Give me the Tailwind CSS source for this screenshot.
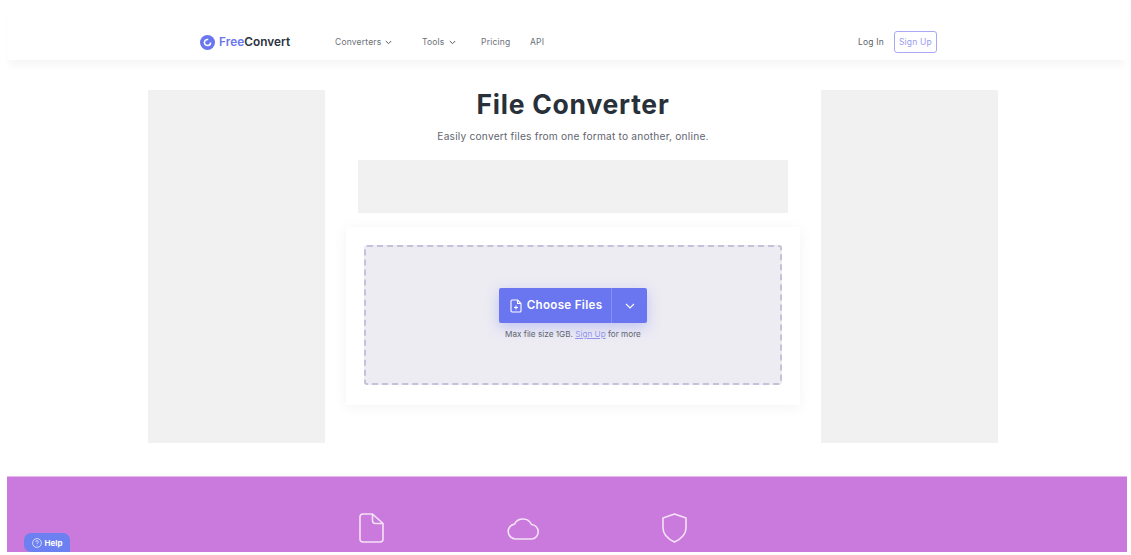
<!DOCTYPE html>
<html lang="en">
<head>
    <meta charset="utf-8">
    <title>File Converter</title>
    <script src="https://cdn.jsdelivr.net/npm/@tailwindcss/browser@4"></script>
</head>
<body class="bg-white font-['Inter',sans-serif] overflow-hidden">
    <div class="relative h-[555px] w-[1131px] overflow-hidden pl-[7px] pr-[4px]">

        <!-- Header -->
        <header class="h-[60px] flex items-center pt-[24px] pl-[193px] pr-[190px] bg-white shadow-[0_8px_7px_-2px_rgba(0,0,0,0.035)]">
            <a class="flex items-center gap-[4px] w-[135px] text-[11.8px] tracking-[0.05px] font-semibold text-[#2b3240]">
                <svg width="15" height="15" viewBox="0 0 16 16" class="shrink-0">
                    <circle cx="8" cy="8" r="8" fill="#6a76ee"/>
                    <circle cx="8" cy="8" r="3.300" fill="none" stroke="#fff" stroke-width="1.600" stroke-dasharray="16 5"/>
                </svg>
                <span class="mt-[1px]"><span class="text-[#6a76ee]">Free</span>Convert</span>
            </a>
            <nav class="flex items-center text-[8.5px] text-[#6b7078] tracking-[0.2px]">
                <a class="flex items-center gap-[4px] w-[87px]">Converters
                    <svg width="7" height="5" viewBox="0 0 7 5" fill="none" stroke="#555b64" stroke-width="1"><path d="M.8 1l2.700 2.700L6.200 1"/></svg>
                </a>
                <a class="flex items-center gap-[4px] w-[59px]">Tools
                    <svg width="7" height="5" viewBox="0 0 7 5" fill="none" stroke="#555b64" stroke-width="1"><path d="M.8 1l2.700 2.700L6.200 1"/></svg>
                </a>
                <a class="w-[49px]">Pricing</a>
                <a>API</a>
            </nav>
            <div class="ml-auto flex items-center gap-[10px] text-[8.5px] tracking-[0.2px]">
                <a class="text-[#5c6169]">Log In</a>
                <a class="h-[22px] w-[43px] flex items-center justify-center rounded-[3px] border border-[#a9a8f5] text-[#9a9cf0]">Sign Up</a>
            </div>
        </header>

        <!-- Main -->
        <main class="flex justify-center gap-[21px] pt-[30px] h-[416px] pl-[12px]">
            <div class="w-[177px] h-[353px] bg-[#f1f1f1]"></div>

            <section class="w-[454px] flex flex-col items-center">
                <h1 class="text-[26.5px] leading-[29px] font-bold tracking-[0.75px] text-[#283039]">File Converter</h1>
                <p class="mt-[10px] text-[10.2px] leading-[14px] tracking-[0.2px] text-[#5f6570]">Easily convert files from one format to another, online.</p>
                <div class="mt-[17px] w-[430px] h-[53px] bg-[#f1f1f1]"></div>

                <div class="mt-[14px] w-[454px] h-[178px] bg-white pt-[18px] pl-[18px] shadow-[0_2px_14px_rgba(0,0,0,0.05)]">
                    <div class="h-[140px] w-[418px] rounded-[3px] border-2 border-dashed border-[#c4c2da] bg-[#edecf3] flex flex-col items-center pt-[41px]">
                        <div class="flex h-[35px] w-[148px] rounded-[2px] bg-[#6a76f0] shadow-[0_4px_14px_rgba(106,118,240,0.35)] text-white">
                            <button class="flex-1 flex items-center justify-center gap-[5px] pl-[2px] text-[11.600px] font-semibold tracking-[0.3px]">
                                <svg width="12" height="14" viewBox="0 0 12 14" fill="none" stroke="#fff" stroke-width="1.100" stroke-linejoin="round">
                                    <path d="M1 2a1 1 0 0 1 1-1h5.500L11 4.500V12a1 1 0 0 1-1 1H2a1 1 0 0 1-1-1z"/>
                                    <path d="M7.500 1v3.500H11M6 6.500v4M4 8.500h4"/>
                                </svg>
                                Choose Files
                            </button>
                            <button class="w-[36px] flex items-center justify-center border-l border-[#8590f5]">
                                <svg width="10" height="6" viewBox="0 0 10 6" fill="none" stroke="#fff" stroke-width="1.100"><path d="M1 1l4 4 4-4"/></svg>
                            </button>
                        </div>
                        <p class="mt-[5px] text-[8.200px] leading-[12px] text-[#5f6570]">Max file size 1GB. <a class="text-[#8f94ee] underline">Sign Up</a> for more</p>
                    </div>
                </div>
            </section>

            <div class="w-[177px] h-[353px] bg-[#f1f1f1]"></div>
        </main>

        <!-- Purple band -->
        <section class="h-[76px] bg-[#c97adc] border-t border-[#e3b6ec] flex items-start gap-[122px] pt-[36px] pl-[352px]">
            <svg width="25" height="30" viewBox="0 0 25 30" fill="none" stroke="#f5e3f8" stroke-width="1.600" stroke-linejoin="round">
                <path d="M1 4a3 3 0 0 1 3-3h9.500L24 10.500V26a3 3 0 0 1-3 3H4a3 3 0 0 1-3-3z"/>
                <path d="M13.500 1v6.500a3 3 0 0 0 3 3H24"/>
            </svg>
            <svg width="33" height="24" viewBox="0 0 33 24" fill="none" stroke="#f5e3f8" stroke-width="1.600" class="mt-[3px] ml-[1px]">
                <path d="M8.500 23a7.500 7.500 0 0 1-1-14.900A9.500 9.500 0 0 1 24.500 8.500 7.300 7.300 0 0 1 25 23z"/>
            </svg>
            <svg width="25" height="30" viewBox="0 0 25 30" fill="none" stroke="#f5e3f8" stroke-width="1.600" stroke-linejoin="round">
                <path d="M12.500 1L24 5V15c0 6.500-5 11-11.500 14C6 26 1 21.500 1 15V5z"/>
            </svg>
        </section>

        <!-- Help button -->
        <a class="absolute left-[24px] top-[533px] h-[19px] w-[46px] rounded-t-[7px] rounded-bl-[7px] bg-[#6d80f2] flex items-center justify-center gap-[3px] text-[8px] font-bold text-white">
            <svg width="10" height="10" viewBox="0 0 10 10" fill="none" stroke="#fff" stroke-width=".7">
                <circle cx="5" cy="5" r="4.400"/>
                <path d="M3.700 4a1.300 1.300 0 1 1 1.800 1.200c-.4.200-.5.400-.5.800M5 7v.5"/>
            </svg>
            Help
        </a>
    </div>
</body>
</html>
